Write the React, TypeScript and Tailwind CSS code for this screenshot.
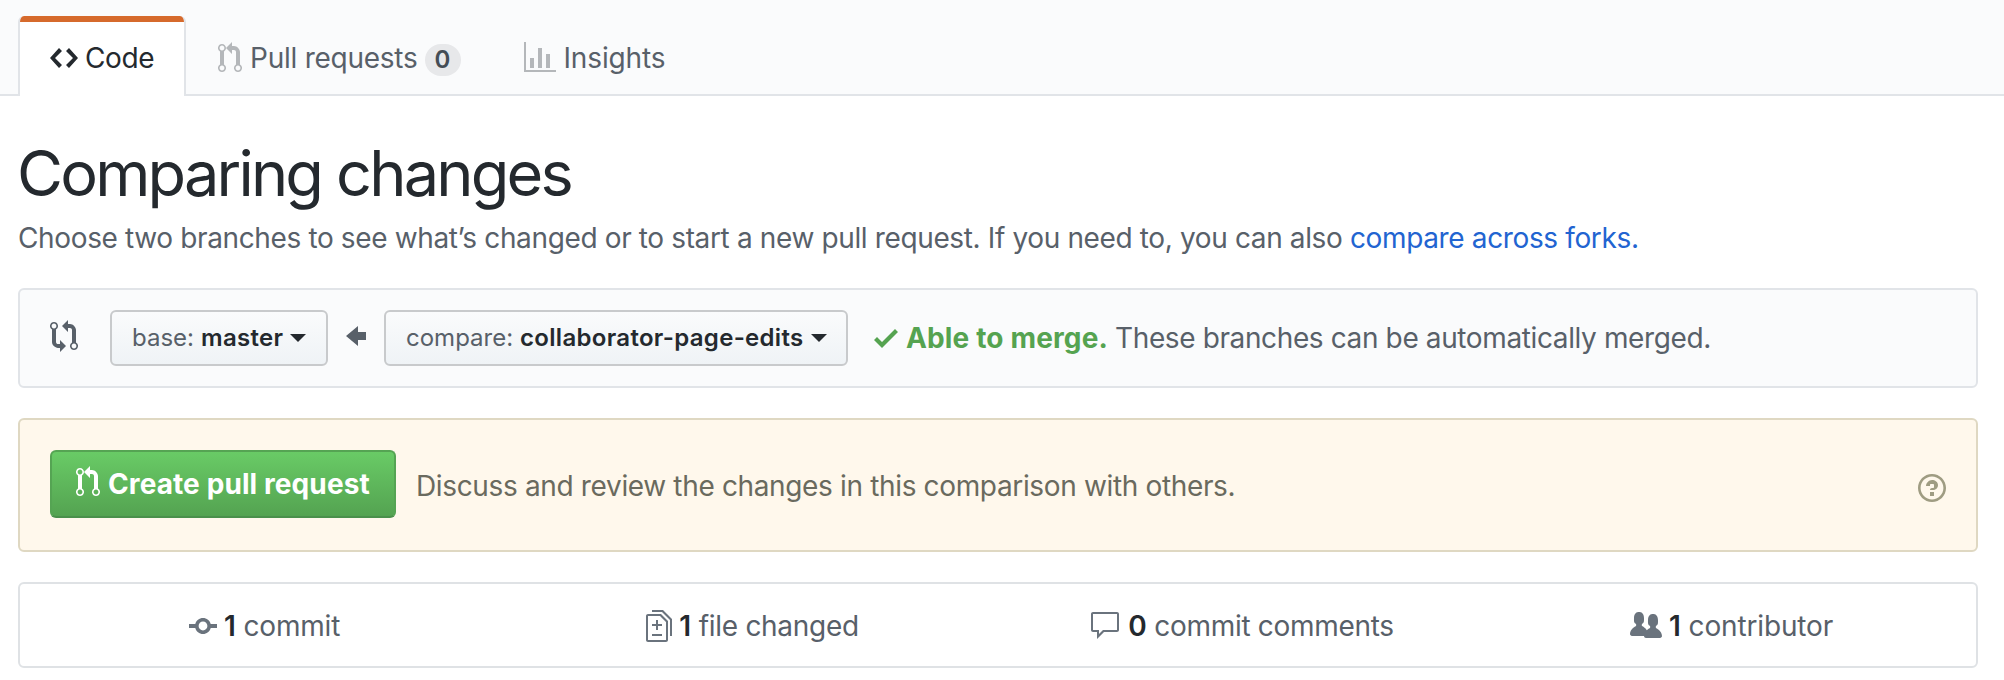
import React from "react";

const paths = {
  code: "M9.5 3L8 4.5 11.5 8 8 11.5 9.5 13 14 8 9.5 3zm-5 0L0 8l4.5 5L6 11.5 2.5 8 6 4.5 4.5 3z",
  pull: "M11 11.28V5c-.03-.78-.34-1.47-.94-2.06C9.46 2.35 8.78 2.03 8 2H7V0L4 3l3 3V4h1c.27.02.48.11.69.31.21.2.3.42.31.69v6.28A1.993 1.993 0 0 0 10 15a1.993 1.993 0 0 0 1-3.72zm-1 2.92c-.66 0-1.2-.55-1.2-1.2 0-.65.55-1.2 1.2-1.2.65 0 1.2.55 1.2 1.2 0 .65-.55 1.2-1.2 1.2zM4 3c0-1.11-.89-2-2-2a1.993 1.993 0 0 0-1 3.72v6.56A1.993 1.993 0 0 0 2 15a1.993 1.993 0 0 0 1-3.72V4.72c.59-.34 1-.98 1-1.72zm-.8 10c0 .66-.55 1.2-1.2 1.2-.65 0-1.2-.55-1.2-1.2 0-.65.55-1.2 1.2-1.2.65 0 1.2.55 1.2 1.2zM2 4.2C1.34 4.2.8 3.65.8 3c0-.65.55-1.2 1.2-1.2.65 0 1.2.55 1.2 1.2 0 .65-.55 1.2-1.2 1.2z",
  graph: "M16 14v1H0V0h1v14h15zM5 13H3V8h2v5zm4 0H7V3h2v10zm4 0h-2V6h2v7z",
  compare: "M5 12H4c-.27-.02-.48-.11-.69-.31-.21-.2-.3-.42-.31-.69V4.72A1.993 1.993 0 0 0 2 1a1.993 1.993 0 0 0-1 3.72V11c.03.78.34 1.47.94 2.06.6.59 1.28.91 2.06.94h1v2l3-3-3-3v2zM2 1.8c.66 0 1.2.55 1.2 1.2 0 .65-.55 1.2-1.2 1.2C1.35 4.2.8 3.65.8 3c0-.65.55-1.2 1.2-1.2zm11 9.48V5c-.03-.78-.34-1.47-.94-2.06-.6-.59-1.28-.91-2.06-.94H9V0L6 3l3 3V4h1c.27.02.48.11.69.31.21.2.3.42.31.69v6.28A1.993 1.993 0 0 0 12 15a1.993 1.993 0 0 0 1-3.72zm-1 2.92c-.66 0-1.2-.55-1.2-1.2 0-.65.55-1.2 1.2-1.2.65 0 1.2.55 1.2 1.2 0 .65-.55 1.2-1.2 1.2z",
  arrow: "M6 3L0 8l6 5v-3h4V6H6V3z",
  check: "M12 5l-8 8-4-4 1.5-1.5L4 10l6.5-6.5L12 5z",
  commit: "M10.86 7c-.45-1.72-2-3-3.86-3-1.86 0-3.41 1.28-3.86 3H0v2h3.14c.45 1.72 2 3 3.86 3 1.86 0 3.41-1.28 3.86-3H14V7h-3.14zM7 10.2c-1.22 0-2.2-.98-2.2-2.2 0-1.22.98-2.2 2.2-2.2 1.22 0 2.2.98 2.2 2.2 0 1.22-.98 2.2-2.2 2.2z",
  diff: "M6 7h2v1H6v2H5V8H3V7h2V5h1v2zm-3 6h5v-1H3v1zM7.5 2L11 5.5V15c0 .55-.45 1-1 1H1c-.55 0-1-.45-1-1V3c0-.55.45-1 1-1h6.5zM10 6L7 3H1v12h9V6zM8.5 0H3v1h5l4 4v8h1V4.5L8.5 0z",
  comment: "M14 1H2c-.55 0-1 .45-1 1v8c0 .55.45 1 1 1h2v3.5L7.5 11H14c.55 0 1-.45 1-1V2c0-.55-.45-1-1-1zm0 9H7l-2 2v-2H2V2h12v8z",
  people: "M16 12.999c0 .439-.45 1-1 1H7.995c-.539 0-.994-.447-.995-.999H1c-.54 0-1-.561-1-1 0-2.634 3-4 3-4s.229-.409 0-1c-.841-.621-1.058-.59-1-3 .058-2.419 1.367-3 2.5-3s2.442.58 2.5 3c.058 2.41-.159 2.379-1 3-.229.59 0 1 0 1s1.549.711 2.42 2.088C9.196 9.369 10 8.999 10 8.999s.229-.409 0-1c-.841-.62-1.058-.59-1-3 .058-2.419 1.367-3 2.5-3s2.437.581 2.495 3c.059 2.41-.158 2.38-1 3-.229.59 0 1 0 1s3.005 1.366 3.005 4z",
  question: "M6 10h2v2H6v-2zm4-3.5C10 8.64 8 9 8 9H6c0-.55.45-1 1-1h.5c.28 0 .5-.22.5-.5v-1c0-.28-.22-.5-.5-.5h-1c-.28 0-.5.22-.5.5V7H4c0-1.5 1.5-3 3-3s3 1 3 2.5zM7 2.3c3.14 0 5.7 2.56 5.7 5.7s-2.56 5.7-5.7 5.7A5.71 5.71 0 0 1 1.3 8c0-3.14 2.56-5.7 5.7-5.7zM7 1C3.14 1 0 4.14 0 8s3.14 7 7 7 7-3.14 7-7-3.14-7-7-7z",
};

function Icon({ name, w, className = "" }: { name: keyof typeof paths; w: number; className?: string }) {
  return (
    <svg width={w * 2} height={32} viewBox={`0 0 ${w} 16`} fill="currentColor" fillRule="evenodd" className={`shrink-0 ${className}`}>
      <path d={paths[name]} />
    </svg>
  );
}

function Caret() {
  return (
    <svg width="16" height="8" viewBox="0 0 16 8" fill="#24292e" className="ml-[7px] shrink-0">
      <path d="M0 0h16L8 8z" />
    </svg>
  );
}

function BranchButton({ label, branch, className }: { label: string; branch: string; className: string }) {
  return (
    <button
      className={`flex h-14 shrink-0 items-center rounded-md border-2 border-[#c8cacc] bg-linear-to-b from-[#fafbfc] to-[#eff3f6] text-[24px] leading-8 ${className}`}
    >
      <span className="text-[#586069]">{label}</span>
      <span className="ml-[7px] font-semibold tracking-[0.3px] text-[#24292e]">{branch}</span>
      <Caret />
    </button>
  );
}

function Stat({ icon, w, count, label, className = "" }: { icon: keyof typeof paths; w: number; count: string; label: string; className?: string }) {
  return (
    <div className={`flex items-center justify-center ${className}`}>
      <Icon name={icon} w={w} className="text-[#6a737d]" />
      <span className="ml-[7px] font-semibold text-[#24292e]">{count}</span>
      <span className="ml-2">{label}</span>
    </div>
  );
}

export default function App() {
  return (
    <div className="h-[680px] w-[2004px] overflow-hidden bg-white font-['Inter',sans-serif] text-[28px] leading-9 text-[#586069]">
      <nav className="flex h-24 items-end border-b-2 border-[#e1e4e8] bg-[#fafbfc] pl-[18px]">
        <div className="-mb-0.5 flex h-20 w-[168px] flex-col overflow-hidden rounded-t-md border-x-2 border-[#e1e4e8] bg-white">
          <div className="h-1.5 shrink-0 bg-[#d66a2c]" />
          <div className="flex h-[72px] items-center gap-[7px] pl-[30px] text-[#24292e]">
            <Icon name="code" w={14} />
            <span className="tracking-[-0.4px]">Code</span>
          </div>
        </div>
        <div className="flex h-[72px] items-center pl-8">
          <Icon name="pull" w={12} className="text-[#b4b7ba]" />
          <span className="ml-2 tracking-[-0.25px]">Pull requests</span>
          <span className="ml-[7px] mt-1 flex h-8 w-9 items-center justify-center rounded-full bg-[#e7e8ea] text-[24px] font-semibold text-[#444d56]">0</span>
        </div>
        <div className="flex h-[72px] items-center pl-[63px]">
          <Icon name="graph" w={16} className="text-[#b4b7ba]" />
          <span className="ml-2 tracking-[-0.15px]">Insights</span>
        </div>
      </nav>

      <main className="pl-[18px] pr-[26px]">
        <h1 className="-ml-px h-[124px] pt-[37px] text-[63px] leading-[80px] tracking-[-2.8px] text-[#24292e]">Comparing changes</h1>
        <p className="h-[68px] whitespace-nowrap tracking-[-0.365px]">
          Choose two branches to see what’s changed or to start a new pull request. If you need to, you can also{" "}
          <a className="text-[#2264d1]">compare across forks.</a>
        </p>

        <section className="flex h-[100px] items-center whitespace-nowrap rounded-md border-2 border-[#e1e4e8] bg-[#fafbfc] pl-[30px]">
          <Icon name="compare" w={14} className="mb-1" />
          <BranchButton label="base:" branch="master" className="ml-8 w-[218px] pl-5" />
          <Icon name="arrow" w={10} className="mx-[18px] mb-1" />
          <BranchButton label="compare:" branch="collaborator-page-edits" className="w-[464px] pl-5" />
          <Icon name="check" w={12} className="ml-[26px] text-[#55a350]" />
          <span className="ml-2 font-bold tracking-[0.15px] text-[#55a350]">Able to merge.</span>
          <span className="ml-[7px] tracking-[-0.38px]">These branches can be automatically merged.</span>
        </section>

        <section className="mt-[30px] flex h-[134px] items-center whitespace-nowrap rounded-md border-2 border-[#dfd8c2] bg-[#fff8ec] pl-[30px] pr-[30px] text-[#6a6a5e]">
          <button className="mb-0.5 flex h-[68px] w-[346px] shrink-0 items-center rounded-md border-2 border-[#55a453] border-b-[#4a904b] bg-linear-to-b from-[#69cb66] to-[#54a351] pl-6 text-white">
            <Icon name="pull" w={12} className="mb-1" />
            <span className="ml-2 font-bold tracking-[0.1px]">Create pull request</span>
          </button>
          <span className="ml-5 mt-0.5 tracking-[-0.35px]">Discuss and review the changes in this comparison with others.</span>
          <Icon name="question" w={14} className="ml-auto mt-1.5 text-[#9f9c82]" />
        </section>

        <section className="mt-[30px] grid h-[86px] grid-cols-4 items-center whitespace-nowrap rounded-md border-2 border-[#dfe2e5] pt-0.5">
          <Stat icon="commit" w={14} count="1" label="commit" className="tracking-[-0.2px]" />
          <Stat icon="diff" w={13} count="1" label="file changed" className="pr-0.5 tracking-[-0.3px]" />
          <Stat icon="comment" w={16} count="0" label="commit comments" className="pr-0.5 tracking-[-0.3px]" />
          <Stat icon="people" w={16} count="1" label="contributor" className="tracking-[-0.15px]" />
        </section>
      </main>
    </div>
  );
}
